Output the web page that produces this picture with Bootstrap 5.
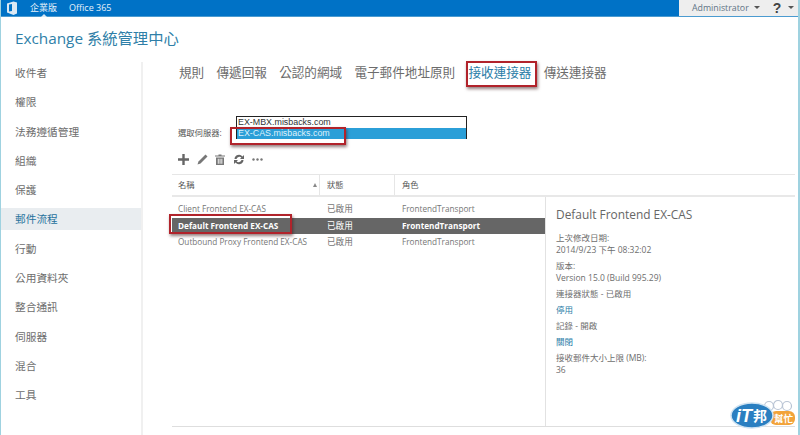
<!DOCTYPE html>
<html lang="zh-Hant">
<head>
<meta charset="utf-8">
<title>Exchange 系統管理中心</title>
<link href="https://cdn.jsdelivr.net/npm/bootstrap@5.3.0/dist/css/bootstrap.min.css" rel="stylesheet">
<style>
html,body{height:435px;overflow:hidden;background:#fff}
body{font-family:"Open Sans","Noto Sans CJK TC",sans-serif;color:#666}
.shell{width:800px;height:435px;position:relative;border-left:1px solid #9fd2e0;border-right:2px solid #9fd2e0;overflow:hidden}
.topbar{height:16.5px;font-size:9px;line-height:12px;border-bottom:1px solid #4b9bd0}
.top-blue{width:678px;background:#0072c6;color:#e6f1fa}
.top-blue svg{margin:0 12px 0 5px}
.top-blue span{margin-right:12px;position:relative}
.top-blue .cur::after{content:"";position:absolute;left:50%;bottom:-3px;margin-left:-3px;border-left:3px solid transparent;border-right:3px solid transparent;border-bottom:3px solid #d9e9f5}
.top-grey{flex:1;background:#eeeeee;color:#5f7486;font-size:8.8px;padding-left:13px}
.caret{width:0;height:0;border-left:3px solid transparent;border-right:3px solid transparent;border-top:3px solid #555;display:inline-block;margin:0 0 1px 5px}
.qmark{font:700 14px/14px "Liberation Sans",sans-serif;color:#444;margin-left:13px}
.caret.last{margin-left:7px}
.app-title{height:45.5px;padding:9px 0 0 14px;font-size:15.3px;line-height:24px;color:#2f7fa8}
.side{width:142px;height:373px;border-right:2px solid #f0f0f0;gap:7.3px}
.side-item{height:22px;line-height:22px;padding-left:14px;font-size:10.7px;color:#6d6d6d}
.side-item.on{background:#e9edf0;color:#26719c}
.main-area{width:655px;padding-left:29px}
.tab-row{height:22px;line-height:22px;gap:12.3px;padding-left:7px;font-size:12.6px;color:#6c6c6c}
.tab-row .on{color:#2a7da8;margin-left:1px}
.pick-row{height:23px;margin-top:32px;padding-left:6px}
.pick-label{width:58px;font-size:8.3px;line-height:11px;padding-top:11px;color:#555}
.pick-box{width:231px;height:23px;border:1px solid #222;font-family:"Liberation Sans",sans-serif;font-size:8.9px;line-height:11px;color:#333;background:#fff}
.pick-box div{height:11px;padding-left:1px}
.pick-box .sel{background:#2b9fd8;color:#dff1fb;height:10.5px}
.tools{height:16px;margin-top:12px;padding-left:6px;gap:7.500px}
.grid-head{height:23px;margin-top:7px;border-top:1px solid #e6e6e6;border-bottom:2px solid #e8e8e8;width:623px;font-size:8.3px;line-height:20px;color:#555}
.cell-a{width:148px;padding-left:6px;flex:none}
.cell-b{width:75px;padding-left:7px;flex:none}
.cell-c{padding-left:7px;flex:1}
.grid-head .cell-a,.grid-head .cell-b{border-right:1px solid #e6e6e6}
.sort{width:0;height:0;border-left:2.500px solid transparent;border-right:2.500px solid transparent;border-bottom:4px solid #888;margin:8px 2px 0 0}
.grid-body{width:623px;height:230px;border-bottom:1px solid #dedede}
.rows{width:373px;padding-top:4px}
.data-row{height:16.5px;line-height:16px;font-size:8.2px;color:#767676}
.data-row .cell-b{font-size:8.6px}
.data-row.on{background:#666;color:#fff;font-weight:700}
.data-row .st{font-weight:400}
.detail{flex:1;border-left:1px solid #e2e2e2;padding:9px 0 0 10px;font-size:8.5px;line-height:12px;color:#6e6e6e}
.detail h6{font-size:11.9px;line-height:16px;font-weight:400;color:#666;margin:0 0 10px}
.detail p{margin:0 0 4px}
.detail a{color:#2a7da8;text-decoration:none}
.mark-box{position:absolute;border:2px solid #b1232b;box-shadow:1px 2px 3px rgba(60,20,20,.55)}
.logo{position:absolute;left:729px;top:399px}
</style>
</head>
<body>
<div class="shell">
  <div class="topbar d-flex">
    <div class="top-blue d-flex align-items-center">
      <svg width="12" height="14" viewBox="0 0 12 14"><path d="M1 2.500 7.500.5 11 1.500v11l-3.500 1.500L1 11.500zM3 3.500v7l3-.5V3z" fill="#dbe9f4" fill-rule="evenodd"/></svg>
      <span class="cur">企業版</span><span>Office 365</span>
    </div>
    <div class="top-grey d-flex align-items-center">Administrator<i class="caret"></i><span class="qmark">?</span><i class="caret last"></i></div>
  </div>
  <div class="app-title">Exchange 系統管理中心</div>
  <div class="d-flex">
    <nav class="side d-flex flex-column">
      <div class="side-item">收件者</div>
      <div class="side-item">權限</div>
      <div class="side-item">法務遵循管理</div>
      <div class="side-item">組織</div>
      <div class="side-item">保護</div>
      <div class="side-item on">郵件流程</div>
      <div class="side-item">行動</div>
      <div class="side-item">公用資料夾</div>
      <div class="side-item">整合通訊</div>
      <div class="side-item">伺服器</div>
      <div class="side-item">混合</div>
      <div class="side-item">工具</div>
    </nav>
    <main class="main-area">
      <div class="tab-row d-flex">
        <span>規則</span><span>傳遞回報</span><span>公認的網域</span><span>電子郵件地址原則</span><span class="on">接收連接器</span><span>傳送連接器</span>
      </div>
      <div class="pick-row d-flex">
        <div class="pick-label">選取伺服器:</div>
        <div class="pick-box"><div>EX-MBX.misbacks.com</div><div class="sel">EX-CAS.misbacks.com</div></div>
      </div>
      <div class="tools d-flex align-items-center">
        <svg width="11" height="11" viewBox="0 0 11 11"><path d="M4.300 0h2.400v4.300H11v2.400H6.700V11H4.300V6.700H0V4.300h4.300z" fill="#666"/></svg>
        <svg width="11" height="11" viewBox="0 0 11 11"><path d="M8.500.5 10.500 2.500 3.500 9.500.5 10.500 1.500 7.500z" fill="#777"/></svg>
        <svg width="10" height="11" viewBox="0 0 10 11"><path d="M3.500.5h3v1H10v1H0v-1h3.500zM1 3.500h8V11H1zM2.800 4.700v5h.9v-5zm1.800 0v5h.9v-5zm1.800 0v5h.9v-5z" fill="#777" fill-rule="evenodd"/></svg>
        <svg width="12" height="11" viewBox="0 0 12 11"><path d="M1.500 5A4.500 4.500 0 0 1 9.500 2.500L11 1v4H7l1.400-1.400A3 3 0 0 0 3.500 5zM10.500 6A4.500 4.500 0 0 1 2.500 8.500L1 10V6h4L3.600 7.400A3 3 0 0 0 8.500 6z" fill="#666"/></svg>
        <svg width="11" height="11" viewBox="0 0 11 11"><circle cx="1.500" cy="5.500" r="1.200" fill="#777"/><circle cx="5.500" cy="5.500" r="1.200" fill="#777"/><circle cx="9.500" cy="5.500" r="1.200" fill="#777"/></svg>
      </div>
      <div class="grid-head d-flex">
        <div class="cell-a d-flex justify-content-between"><span>名稱</span><i class="sort"></i></div>
        <div class="cell-b">狀態</div>
        <div class="cell-c">角色</div>
      </div>
      <div class="grid-body d-flex">
        <div class="rows">
          <div class="data-row d-flex"><div class="cell-a text-nowrap">Client Frontend EX-CAS</div><div class="cell-b">已啟用</div><div class="cell-c">FrontendTransport</div></div>
          <div class="data-row on d-flex"><div class="cell-a text-nowrap">Default Frontend EX-CAS</div><div class="cell-b st">已啟用</div><div class="cell-c">FrontendTransport</div></div>
          <div class="data-row d-flex"><div class="cell-a text-nowrap">Outbound Proxy Frontend EX-CAS</div><div class="cell-b">已啟用</div><div class="cell-c">FrontendTransport</div></div>
        </div>
        <aside class="detail">
          <h6>Default Frontend EX-CAS</h6>
          <p>上次修改日期:<br>2014/9/23 下午 08:32:02</p>
          <p>版本:<br>Version 15.0 (Build 995.29)</p>
          <p>連接器狀態 - 已啟用</p>
          <p><a href="#">停用</a></p>
          <p>記錄 - 開啟</p>
          <p><a href="#">關閉</a></p>
          <p>接收郵件大小上限 (MB):<br>36</p>
        </aside>
      </div>
    </main>
  </div>
  <div class="mark-box" style="left:465px;top:61px;width:71px;height:26px"></div>
  <div class="mark-box" style="left:229px;top:127px;width:116px;height:18px"></div>
  <div class="mark-box" style="left:168px;top:214px;width:123px;height:20px"></div>
  <svg class="logo" width="68" height="30" viewBox="0 0 68 30">
    <g fill="#fff" stroke="#b9c4d4" stroke-width="1.200"><circle cx="39" cy="7" r="4.500"/><circle cx="48" cy="6" r="4.500"/><circle cx="57" cy="7" r="4.500"/></g>
    <rect x="40" y="12" width="25" height="14" rx="6" fill="#f2a33a"/>
    <text x="44" y="23" font-size="9.500" font-weight="700" fill="#fff" font-family="Noto Sans CJK TC,sans-serif">幫忙</text>
    <ellipse cx="22" cy="16.500" rx="21" ry="12.500" fill="#2a7fc1" stroke="#cfe3f2" stroke-width="1.500"/>
    <text x="6" y="23" font-size="18" font-weight="700" font-style="italic" fill="#fff" font-family="Liberation Sans,sans-serif">iT</text>
    <text x="23" y="22" font-size="14" font-weight="700" fill="#fff" font-family="Noto Sans CJK TC,sans-serif">邦</text>
  </svg>
</div>
<script src="https://cdn.jsdelivr.net/npm/bootstrap@5.3.0/dist/js/bootstrap.bundle.min.js"></script>
</body>
</html>
